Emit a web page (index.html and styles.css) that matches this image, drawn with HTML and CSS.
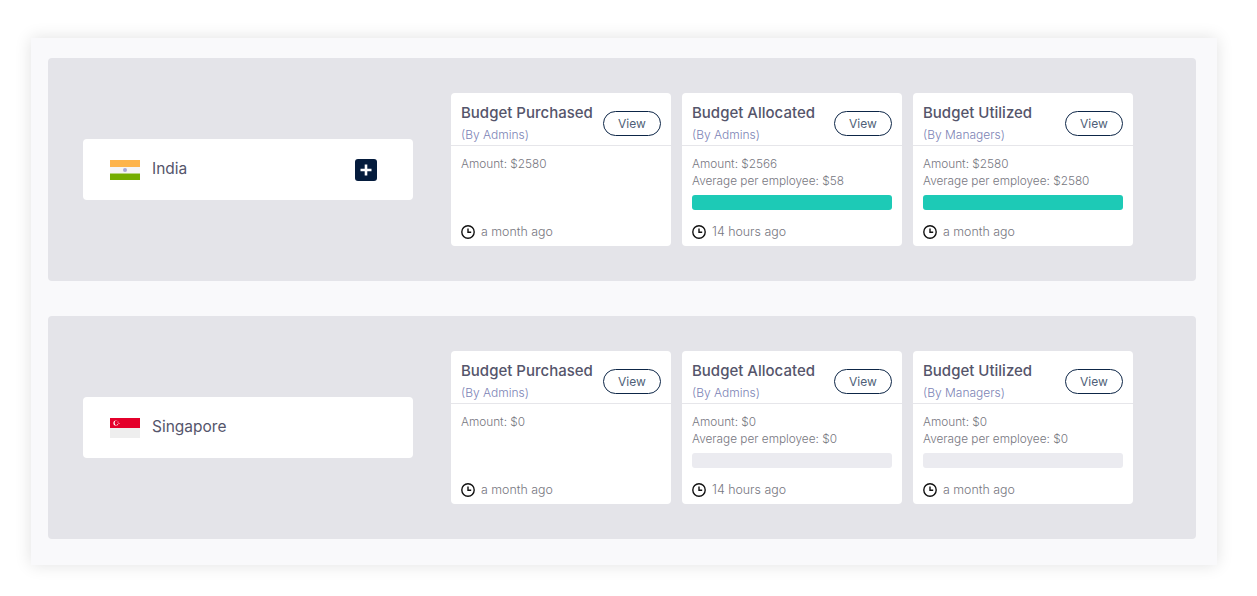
FILE: index.html
```html
<!DOCTYPE html>
<html lang="en">
<head>
    <meta charset="UTF-8">
    <meta name="viewport" content="width=device-width, initial-scale=1.0">
    <title>Budget Overview</title>
    <link rel="stylesheet" href="styles.css">
</head>
<body>

<div class="panel">
    <!-- India -->
    <div class="country-row">
        <div class="country-card">
            <svg class="flag" viewBox="0 0 30 20">
                <rect width="30" height="7" fill="#fdb44b"/>
                <rect y="7" width="30" height="6.5" fill="#f5f5f5"/>
                <rect y="13.5" width="30" height="6.5" fill="#74ad00"/>
                <circle cx="15" cy="10" r="2" fill="#a9a9d6"/>
            </svg>
            <span class="country-name">India</span>
            <button class="add-button">
                <svg viewBox="0 0 22 22"><path d="M11 5.5v11M5.5 11h11" stroke="#fff" stroke-width="2.6"/></svg>
            </button>
        </div>
        <div class="cards">
            <div class="card">
                <div class="card-header">
                    <div class="card-title">
                        <div class="title">Budget Purchased</div>
                        <div class="subtitle">(By Admins)</div>
                    </div>
                    <button class="view-button">View</button>
                </div>
                <div class="card-body">
                    <div class="line">Amount: $2580</div>
                </div>
                <div class="card-footer">
                    <svg class="clock" viewBox="0 0 14 14"><circle cx="7" cy="7" r="6.2"/><path d="M7 3.4v3.8h3.2"/></svg>
                    a month ago
                </div>
            </div>
            <div class="card">
                <div class="card-header">
                    <div class="card-title">
                        <div class="title">Budget Allocated</div>
                        <div class="subtitle">(By Admins)</div>
                    </div>
                    <button class="view-button">View</button>
                </div>
                <div class="card-body">
                    <div class="line">Amount: $2566</div>
                    <div class="line">Average per employee: $58</div>
                    <div class="bar bar-full"></div>
                </div>
                <div class="card-footer">
                    <svg class="clock" viewBox="0 0 14 14"><circle cx="7" cy="7" r="6.2"/><path d="M7 3.4v3.8h3.2"/></svg>
                    14 hours ago
                </div>
            </div>
            <div class="card">
                <div class="card-header">
                    <div class="card-title">
                        <div class="title">Budget Utilized</div>
                        <div class="subtitle">(By Managers)</div>
                    </div>
                    <button class="view-button">View</button>
                </div>
                <div class="card-body">
                    <div class="line">Amount: $2580</div>
                    <div class="line">Average per employee: $2580</div>
                    <div class="bar bar-full"></div>
                </div>
                <div class="card-footer">
                    <svg class="clock" viewBox="0 0 14 14"><circle cx="7" cy="7" r="6.2"/><path d="M7 3.4v3.8h3.2"/></svg>
                    a month ago
                </div>
            </div>
        </div>
    </div>

    <!-- Singapore -->
    <div class="country-row">
        <div class="country-card">
            <svg class="flag" viewBox="0 0 30 20">
                <rect width="30" height="10" fill="#e4002b"/>
                <rect y="10" width="30" height="10" fill="#eeeeee"/>
                <circle cx="6" cy="5" r="2.6" fill="#fff"/>
                <circle cx="7" cy="5" r="2.4" fill="#e4002b"/>
                <circle cx="8" cy="4" r=".5" fill="#fff"/>
                <circle cx="9" cy="5.6" r=".5" fill="#fff"/>
                <circle cx="7.4" cy="6.6" r=".5" fill="#fff"/>
            </svg>
            <span class="country-name">Singapore</span>
        </div>
        <div class="cards">
            <div class="card">
                <div class="card-header">
                    <div class="card-title">
                        <div class="title">Budget Purchased</div>
                        <div class="subtitle">(By Admins)</div>
                    </div>
                    <button class="view-button">View</button>
                </div>
                <div class="card-body">
                    <div class="line">Amount: $0</div>
                </div>
                <div class="card-footer">
                    <svg class="clock" viewBox="0 0 14 14"><circle cx="7" cy="7" r="6.2"/><path d="M7 3.4v3.8h3.2"/></svg>
                    a month ago
                </div>
            </div>
            <div class="card">
                <div class="card-header">
                    <div class="card-title">
                        <div class="title">Budget Allocated</div>
                        <div class="subtitle">(By Admins)</div>
                    </div>
                    <button class="view-button">View</button>
                </div>
                <div class="card-body">
                    <div class="line">Amount: $0</div>
                    <div class="line">Average per employee: $0</div>
                    <div class="bar"></div>
                </div>
                <div class="card-footer">
                    <svg class="clock" viewBox="0 0 14 14"><circle cx="7" cy="7" r="6.2"/><path d="M7 3.4v3.8h3.2"/></svg>
                    14 hours ago
                </div>
            </div>
            <div class="card">
                <div class="card-header">
                    <div class="card-title">
                        <div class="title">Budget Utilized</div>
                        <div class="subtitle">(By Managers)</div>
                    </div>
                    <button class="view-button">View</button>
                </div>
                <div class="card-body">
                    <div class="line">Amount: $0</div>
                    <div class="line">Average per employee: $0</div>
                    <div class="bar"></div>
                </div>
                <div class="card-footer">
                    <svg class="clock" viewBox="0 0 14 14"><circle cx="7" cy="7" r="6.2"/><path d="M7 3.4v3.8h3.2"/></svg>
                    a month ago
                </div>
            </div>
        </div>
    </div>
</div>

</body>
</html>
```

FILE: styles.css
```css
* {
    box-sizing: border-box;
}

body {
    font-family: "Inter", "Liberation Sans", sans-serif;
    margin: 0;
    min-height: 100vh;
    padding: 38px 0 0 31px;
    background-color: #fff;
}

.panel {
    width: 1186px;
    height: 527px;
    padding: 20px 21px 26px 17px;
    display: flex;
    flex-direction: column;
    gap: 35px;
    background-color: #f9f9fb;
    box-shadow: 0 0 16px rgba(0, 0, 0, 0.12);
}

.country-row {
    height: 223px;
    display: flex;
    align-items: center;
    padding-left: 35px;
    gap: 38px;
    background-color: #e4e4e9;
    border-radius: 4px;
}

.country-card {
    width: 330px;
    height: 61px;
    display: flex;
    align-items: center;
    padding: 0 36px 0 27px;
    background-color: #fff;
    border-radius: 4px;
}

.flag {
    width: 30px;
    height: 20px;
    margin-right: 12px;
}

.country-name {
    flex-grow: 1;
    padding-bottom: 2px;
    font-size: 15.5px;
    color: #55556b;
}

.add-button {
    width: 22px;
    height: 22px;
    padding: 0;
    border: none;
    border-radius: 3px;
    background-color: #051c3d;
    display: flex;
}

.cards {
    display: flex;
    gap: 11px;
}

.card {
    width: 220px;
    height: 153px;
    display: flex;
    flex-direction: column;
    background-color: #fff;
    border-radius: 4px;
}

.card-header {
    height: 53px;
    display: flex;
    justify-content: space-between;
    padding: 10px 10px 0;
    border-bottom: 1px solid #e6e6ea;
}

.title {
    font-size: 15px;
    line-height: 20px;
    font-weight: 500;
    white-space: nowrap;
    color: #55556b;
}

.subtitle {
    font-size: 12px;
    line-height: 20px;
    font-weight: 300;
    margin-top: 2px;
    color: #7c83b5;
}

.view-button {
    width: 58px;
    height: 25px;
    margin-top: 8px;
    padding: 0;
    font-family: inherit;
    font-size: 12px;
    color: #4f5f78;
    background-color: #fff;
    border: 1px solid #0d2647;
    border-radius: 13px;
}

.card-body {
    flex-grow: 1;
    padding: 10px 10px 0;
}

.line {
    font-size: 11.8px;
    line-height: 17px;
    font-weight: 300;
    white-space: nowrap;
    color: #77777f;
}

.bar {
    height: 15px;
    margin-top: 5px;
    background-color: #ebebf0;
    border-radius: 3px;
}

.bar-full {
    background-color: #1dcab6;
}

.card-footer {
    display: flex;
    align-items: center;
    gap: 6px;
    height: 28px;
    padding: 0 10px 2px;
    font-size: 12.4px;
    font-weight: 300;
    color: #77777f;
}

.clock {
    width: 14px;
    height: 14px;
    margin-top: 2px;
    fill: none;
    stroke: #111;
    stroke-width: 1.4;
}
```
